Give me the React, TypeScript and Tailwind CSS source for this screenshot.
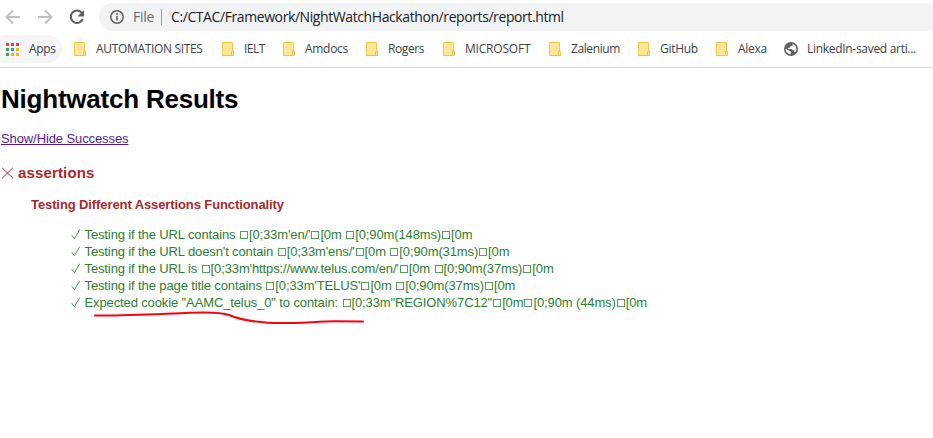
import React from "react";

const bookmarks = [
  { label: "AUTOMATION SITES", item: "w-[148px]", text: "tracking-[-0.33px]" },
  { label: "IELT", item: "w-[61px]", text: "tracking-[-0.5px]" },
  { label: "Amdocs", item: "w-[83px]", text: "tracking-[-0.3px]" },
  { label: "Rogers", item: "w-[77px]", text: "tracking-[-0.4px]" },
  { label: "MICROSOFT", item: "w-[106px]", text: "tracking-[-0.2px]" },
  { label: "Zalenium", item: "w-[89px]", text: "tracking-[-0.4px]" },
  { label: "GitHub", item: "w-[78px]", text: "tracking-[-0.3px]" },
  { label: "Alexa", item: "w-[68px]", text: "tracking-[-0.3px]" },
];

const results = [
  "Testing if the URL contains ^[0;33m'en/'^[0m ^[0;90m(148ms)^[0m",
  "Testing if the URL doesn't contain ^[0;33m'ens/'^[0m ^[0;90m(31ms)^[0m",
  "Testing if the URL is ^[0;33m'https://www.telus.com/en/'^[0m ^[0;90m(37ms)^[0m",
  "Testing if the page title contains ^[0;33m'TELUS'^[0m ^[0;90m(37ms)^[0m",
  "Expected cookie \"AAMC_telus_0\" to contain: ^[0;33m\"REGION%7C12\"^[0m^[0;90m (44ms)^[0m",
];

const appColors = [
  "#f44336", "#ea4335", "#ea4335",
  "#34a25a", "#2a8cf0", "#fbb40a",
  "#34a25a", "#fbb40a", "#fbb40a",
];

function Folder() {
  return (
    <svg width="13" height="14" viewBox="0 0 13 14" className="shrink-0">
      <path d="M.5.5h10v9h1v4H.5z" fill="#ffe694" stroke="#e8c651" />
      <path d="M9.5 13V9.5h2v4h-2" fill="#ffe694" stroke="#e8c651" />
    </svg>
  );
}

// Unprintable escape characters are shown as hollow boxes.
function Escaped({ text }: { text: string }) {
  return (
    <>
      {text.split("^").map((part, i) => (
        <React.Fragment key={i}>
          {i > 0 && <span className="mr-px ml-px inline-block h-[8px] w-[8px] border border-[#5b9c5d]" />}
          {part}
        </React.Fragment>
      ))}
    </>
  );
}

export default function App() {
  return (
    <div className="relative h-[438px] w-[933px] overflow-hidden bg-white font-['Liberation_Sans',Arial,sans-serif]">
      <header className="h-[68px] border-b border-[#d9dadc] font-['Open_Sans','Noto_Sans',sans-serif]">
        <div className="flex h-[34px] items-start pt-[3px]">
          <svg width="99" height="28" viewBox="0 0 99 28" fill="none" className="shrink-0">
            <path d="M20 14H7M13 7.5 6.5 14l6.5 6.5" stroke="#bdbfc1" strokeWidth="1.9" />
            <path d="M38 14h13M45 7.5l6.5 6.5-6.5 6.5" stroke="#bdbfc1" strokeWidth="1.9" />
            <path d="M81.6 9.6A6.2 6.2 0 1 0 82.8 16" stroke="#5a5d61" strokeWidth="2.1" />
            <path d="M84 7v6.5h-6.5z" fill="#5a5d61" />
          </svg>
          <div className="flex h-7 flex-1 items-center rounded-l-full bg-[#f1f3f4] pl-[11px] text-sm">
            <svg width="14" height="14" viewBox="0 0 14 14" className="shrink-0" fill="none" stroke="#5f6368">
              <circle cx="7" cy="7" r="6.2" strokeWidth="1.5" />
              <path d="M7 6.1v4.5M7 3.3v1.6" strokeWidth="1.6" />
            </svg>
            <span className="ml-[9px] w-[28px] tracking-[-0.3px] text-[#6b6e72]">File</span>
            <span className="h-4 w-px bg-[#9a9c9f]" />
            <span className="ml-[9px] whitespace-nowrap tracking-[-0.41px] text-[#202124]">
              C:/CTAC/Framework/NightWatchHackathon/reports/report.html
            </span>
          </div>
        </div>
        <nav className="flex h-[30px] items-center text-xs text-[#3c4043]">
          <div className="mr-3 -ml-2 flex h-7 w-[70px] shrink-0 items-center rounded-full bg-[#f5f5f5] pl-[14px]">
            <div className="grid grid-cols-3 gap-[2px]">
              {appColors.map((c, i) => (
                <span key={i} className="size-[3px]" style={{ backgroundColor: c }} />
              ))}
            </div>
            <span className="ml-[10px] tracking-[-0.3px]">Apps</span>
          </div>
          {bookmarks.map((b) => (
            <div key={b.label} className={"flex shrink-0 items-center gap-[9px] whitespace-nowrap " + b.item}>
              <Folder />
              <span className={b.text}>{b.label}</span>
            </div>
          ))}
          <svg width="14" height="14" viewBox="0 0 14 14" className="shrink-0">
            <circle cx="7" cy="7" r="7" fill="#5f6368" />
            <path d="M7.600 1.600 9 2.200 8.600 3.600 6.600 4.200 5.800 5.800H4.200V7H7.400L8.800 8.300H10.200V10.200L12 9.600C13.200 6.500 11.500 2.500 7.600 1.600M1.600 6.800 4.600 8.600 6.800 9.600V12.300C4 12 1.500 10 1.600 6.800" fill="#fff" />
          </svg>
          <span className="ml-[9px] whitespace-nowrap tracking-[-0.3px]">LinkedIn-saved arti...</span>
        </nav>
      </header>

      <main className="pl-px text-[13px]">
        <h1 className="pt-[14px] text-[26px] leading-[34px] font-bold tracking-[-0.22px] text-black">Nightwatch Results</h1>
        <a className="mt-[14px] block w-fit leading-[17px] tracking-[-0.1px] text-[#551a8b] underline" href="#">Show/Hide Successes</a>
        <div className="mt-[17px] flex h-[18px] items-center text-[15px] font-bold text-[#a52a2a]">
          <svg width="13" height="12" viewBox="0 0 13 12" fill="none" stroke="#a52a2a" className="shrink-0">
            <path d="m1 .7 11 10.600M12 .7 1 11.300" />
          </svg>
          <h2 className="ml-1 tracking-[0.15px]">assertions</h2>
        </div>
        <h3 className="mt-[14px] ml-[30px] leading-[17px] font-bold tracking-[-0.1px] text-[#a52a2a]">
          Testing Different Assertions Functionality
        </h3>
        <ul className="mt-[13px] ml-[70px] tracking-[-0.12px] text-[#2e7d32]">
          {results.map((r) => (
            <li key={r} className="flex h-[17px] items-center whitespace-pre">
              <svg width="10" height="11" viewBox="0 0 10 11" fill="none" stroke="#4b934e" className="mr-[3.5px] shrink-0">
                <path d="M.8 6.200 3.300 9.800 8.700.7" />
              </svg>
              <span><Escaped text={r} /></span>
            </li>
          ))}
        </ul>
      </main>

      <svg className="absolute top-[305px] left-[90px]" width="280" height="24" viewBox="90 305 280 24" fill="none">
        <path d="M95 315.500C125 316 158 314 190 312.800C209 312 222 312.500 229 315C238 319 250 321.500 268 322.800C290 324 315 321.500 335 321.300L363 321.500" stroke="#f4040c" strokeWidth="2" strokeLinecap="round" />
      </svg>
    </div>
  );
}
